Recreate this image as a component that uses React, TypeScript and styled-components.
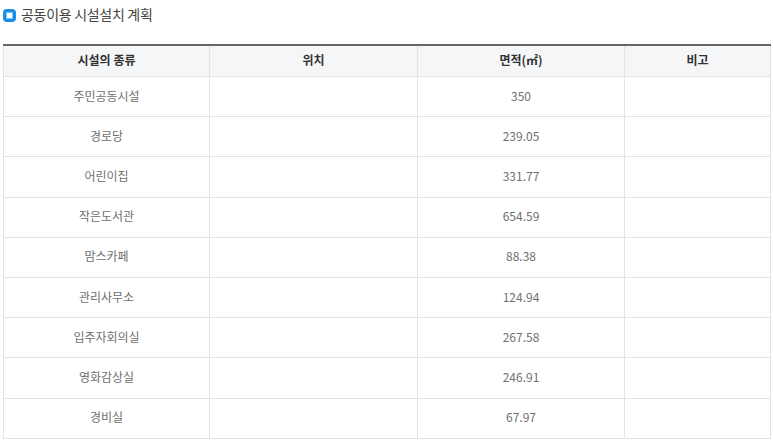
import React from "react";
import styled, { createGlobalStyle } from "styled-components";

const Global = createGlobalStyle`
  html, body { margin: 0; padding: 0; background: #fff; }
  body { font-family: "Noto Sans CJK KR", "Noto Sans", sans-serif; }
`;

const Page = styled.div`
  padding: 4px 3px 0 3px;
  width: 767px;
`;

const TitleRow = styled.div`
  display: flex;
  align-items: center;
  gap: 5px;
  height: 22px;
  margin-bottom: 18px;
`;

const Bullet = styled.span`
  box-sizing: border-box;
  width: 13px;
  height: 13px;
  border: 3px solid #1a8ee6;
  border-radius: 4px;
  background: #fff;
  box-shadow: inset 0 0 0 1px #7cc4f2;
`;

const Title = styled.h3`
  margin: 0 0 2px 0;
  font-size: 14px;
  font-weight: 400;
  color: #444;
  letter-spacing: -0.3px;
`;

const Table = styled.table`
  width: 767px;
  border-collapse: collapse;
  table-layout: fixed;
  border-top: 2px solid #666;
`;

const Th = styled.th`
  height: 26px;
  padding: 0 0 4px 0;
  background: #f5f6f8;
  border: 1px solid #e3e3e3;
  border-top: none;
  font-size: 12px;
  font-weight: 700;
  color: #333;
  text-align: center;
`;

const Td = styled.td`
  height: 36.2px;
  padding: 0 0 3px 0;
  border: 1px solid #e3e3e3;
  font-size: 12px;
  color: #6f6f6f;
  text-align: center;
`;

const rows: [string, string][] = [
  ["주민공동시설", "350"],
  ["경로당", "239.05"],
  ["어린이집", "331.77"],
  ["작은도서관", "654.59"],
  ["맘스카페", "88.38"],
  ["관리사무소", "124.94"],
  ["입주자회의실", "267.58"],
  ["영화감상실", "246.91"],
  ["경비실", "67.97"],
];

export default function App() {
  return (
    <Page>
      <Global />
      <TitleRow>
        <Bullet />
        <Title>공동이용 시설설치 계획</Title>
      </TitleRow>
      <Table>
        <colgroup>
          <col style={{ width: 206 }} />
          <col style={{ width: 208 }} />
          <col style={{ width: 207 }} />
          <col style={{ width: 146 }} />
        </colgroup>
        <thead>
          <tr>
            <Th>시설의 종류</Th>
            <Th>위치</Th>
            <Th>면적(㎡)</Th>
            <Th>비고</Th>
          </tr>
        </thead>
        <tbody>
          {rows.map(([name, area]) => (
            <tr key={name}>
              <Td>{name}</Td>
              <Td />
              <Td>{area}</Td>
              <Td />
            </tr>
          ))}
        </tbody>
      </Table>
    </Page>
  );
}
